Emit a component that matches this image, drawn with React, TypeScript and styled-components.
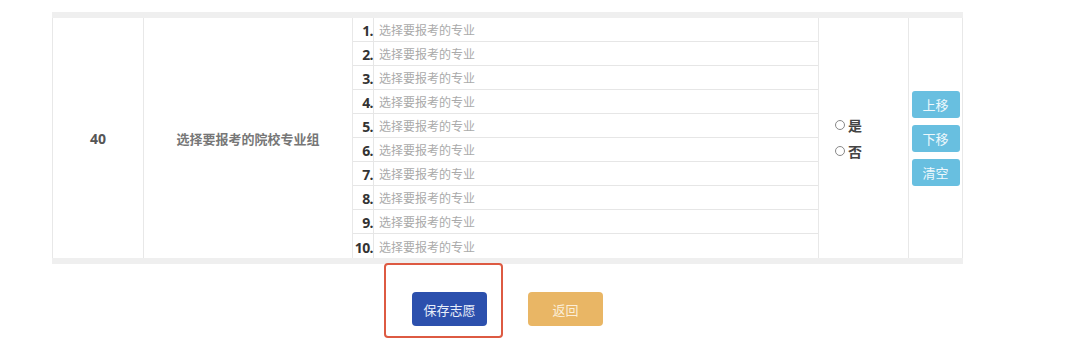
import React from "react";
import styled, { createGlobalStyle } from "styled-components";

const GlobalStyle = createGlobalStyle`
  body {
    margin: 0;
    background: #fff;
    font-family: "Open Sans", "Noto Sans CJK SC", sans-serif;
  }
`;

const Page = styled.div`
  width: 1080px;
  height: 344px;
  padding: 12px 0 0 52px;
  box-sizing: border-box;
  overflow: hidden;
`;

const Board = styled.div`
  width: 911px;
`;

const Band = styled.div`
  height: 6px;
  background: #efefef;
`;

const Row = styled.div`
  display: grid;
  grid-template-columns: 91px 209px 466px 90px 55px;
  height: 240px;
  border-left: 1px solid #e8e8e8;
  border-right: 1px solid #e8e8e8;
  box-sizing: border-box;
`;

const Cell = styled.div`
  display: flex;
  align-items: center;
  justify-content: center;
  border-right: 1px solid #e8e8e8;
  box-sizing: border-box;
`;

const Num = styled.span`
  font-size: 14px;
  font-weight: 700;
  color: #555;
`;

const Group = styled.span`
  font-family: "Noto Sans CJK SC", sans-serif;
  font-size: 13px;
  font-weight: 700;
  color: #777;
`;

const Majors = styled.div`
  display: flex;
  flex-direction: column;
  border-right: 1px solid #e8e8e8;
`;

const MajorRow = styled.div`
  display: grid;
  grid-template-columns: 21px 1fr;
  height: 24px;
  border-bottom: 1px solid #e6e6e6;
  box-sizing: border-box;
  &:last-child {
    border-bottom: none;
  }
`;

const Index = styled.span`
  display: flex;
  align-items: center;
  justify-content: flex-end;
  padding-top: 2px;
  font-size: 14px;
  font-weight: 700;
  color: #333;
  letter-spacing: -0.6px;
  border-right: 1px solid #e6e6e6;
`;

const MajorInput = styled.input`
  border: none;
  outline: none;
  padding: 0 0 0 5px;
  font-family: "Noto Sans CJK SC", sans-serif;
  font-size: 12px;
  color: #333;
  background: #fff;
  &::placeholder {
    color: #aaa;
  }
`;

const RadioCell = styled.div`
  display: flex;
  flex-direction: column;
  justify-content: center;
  gap: 6px;
  padding-left: 16px;
  border-right: 1px solid #e8e8e8;
`;

const RadioLabel = styled.label`
  display: flex;
  align-items: center;
  gap: 3px;
  height: 20px;
  font-family: "Noto Sans CJK SC", sans-serif;
  font-size: 14px;
  font-weight: 700;
  color: #444;
`;

const Circle = styled.span`
  width: 10px;
  height: 10px;
  border: 1px solid #888;
  border-radius: 50%;
  box-sizing: border-box;
`;

const ToolCell = styled.div`
  display: flex;
  flex-direction: column;
  align-items: center;
  justify-content: center;
  gap: 7px;
  padding-right: 2px;
`;

const ToolButton = styled.button`
  width: 48px;
  height: 27px;
  border: none;
  border-radius: 3px;
  background: #68bfe0;
  color: #eef8fc;
  font-family: "Noto Sans CJK SC", sans-serif;
  font-size: 13px;
  padding: 0;
`;

const Actions = styled.div`
  display: flex;
  justify-content: center;
  gap: 41px;
  padding-top: 28px;
`;

const ActionButton = styled.button<{ $tone: "primary" | "warn" }>`
  position: relative;
  width: 75px;
  height: 34px;
  border: none;
  border-radius: 4px;
  background: ${(p) => (p.$tone === "primary" ? "#2c50ad" : "#e9b665")};
  color: ${(p) => (p.$tone === "primary" ? "#e8eef9" : "#fbeed8")};
  font-family: "Noto Sans CJK SC", sans-serif;
  font-size: 13px;
  padding: 0;
`;

const Highlight = styled.span`
  position: absolute;
  left: -28px;
  top: -29px;
  width: 119px;
  height: 75px;
  border: 2px solid #dd5a42;
  border-radius: 4px;
  box-sizing: border-box;
  pointer-events: none;
`;

const majors = Array.from({ length: 10 }, (_, i) => i + 1);

export default function App() {
  return (
    <Page>
      <GlobalStyle />
      <Board>
        <Band />
        <Row>
          <Cell>
            <Num>40</Num>
          </Cell>
          <Cell>
            <Group>选择要报考的院校专业组</Group>
          </Cell>
          <Majors>
            {majors.map((n) => (
              <MajorRow key={n}>
                <Index>{n}.</Index>
                <MajorInput placeholder="选择要报考的专业" readOnly />
              </MajorRow>
            ))}
          </Majors>
          <RadioCell>
            <RadioLabel>
              <Circle />是
            </RadioLabel>
            <RadioLabel>
              <Circle />否
            </RadioLabel>
          </RadioCell>
          <ToolCell>
            <ToolButton>上移</ToolButton>
            <ToolButton>下移</ToolButton>
            <ToolButton>清空</ToolButton>
          </ToolCell>
        </Row>
        <Band />
        <Actions>
          <ActionButton $tone="primary">
            <Highlight />
            保存志愿
          </ActionButton>
          <ActionButton $tone="warn">返回</ActionButton>
        </Actions>
      </Board>
    </Page>
  );
}
